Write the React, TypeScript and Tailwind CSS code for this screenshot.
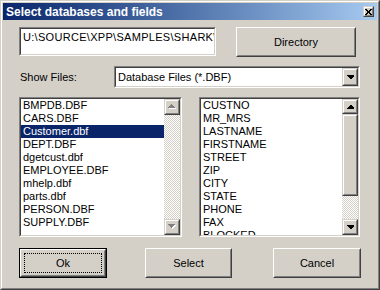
import React from "react";

const F = "font-['Liberation_Sans',Arial,sans-serif]";

function Sunken({ className = "", innerClass = "", children }: { className?: string; innerClass?: string; children?: React.ReactNode }) {
  return (
    <div className={`border border-t-[#808080] border-l-[#808080] border-r-white border-b-white ${className}`}>
      <div className={`w-full h-full border border-t-[#404040] border-l-[#404040] border-r-[#D4D0C8] border-b-[#D4D0C8] bg-white ${innerClass}`}>
        {children}
      </div>
    </div>
  );
}

function Raised({ className = "", innerClass = "", children }: { className?: string; innerClass?: string; children?: React.ReactNode }) {
  return (
    <div className={`border border-t-white border-l-white border-r-[#404040] border-b-[#404040] ${className}`}>
      <div className={`w-full h-full border border-t-[#D4D0C8] border-l-[#D4D0C8] border-r-[#808080] border-b-[#808080] bg-[#D4D0C8] ${innerClass}`}>
        {children}
      </div>
    </div>
  );
}

function SBtn({ className = "", children }: { className?: string; children?: React.ReactNode }) {
  return (
    <div className={`border border-t-[#D4D0C8] border-l-[#D4D0C8] border-r-[#404040] border-b-[#404040] ${className}`}>
      <div className="w-full h-full border border-t-white border-l-white border-r-[#808080] border-b-[#808080] bg-[#D4D0C8] flex items-center justify-center">
        {children}
      </div>
    </div>
  );
}

function Arrow({ dir, disabled }: { dir: "up" | "down"; disabled?: boolean }) {
  const pts = dir === "up" ? "3,0 4,0 7,3 7,4 0,4 0,3" : "0,0 7,0 7,1 4,4 3,4 0,1";
  const up = dir === "up" ? "M3.5 0 L7 4 L0 4 Z" : "M0 0 L7 0 L3.5 4 Z";
  if (disabled) {
    return (
      <svg width="9" height="6" viewBox="0 0 9 6" shapeRendering="crispEdges">
        <path d={up} transform="translate(1,1)" fill="#ffffff" />
        <path d={up} fill="#808080" />
      </svg>
    );
  }
  return (
    <svg width="7" height="4" viewBox="0 0 7 4" shapeRendering="crispEdges">
      <polygon points={pts} fill="#000" />
    </svg>
  );
}

const checker = "bg-[repeating-conic-gradient(#D4D0C8_0_25%,#ffffff_0_50%)] bg-[length:2px_2px]";

const files = ["BMPDB.DBF", "CARS.DBF", "Customer.dbf", "DEPT.DBF", "dgetcust.dbf", "EMPLOYEE.DBF", "mhelp.dbf", "parts.dbf", "PERSON.DBF", "SUPPLY.DBF"];
const fields = ["CUSTNO", "MR_MRS", "LASTNAME", "FIRSTNAME", "STREET", "ZIP", "CITY", "STATE", "PHONE", "FAX", "BLOCKED"];

export default function App() {
  return (
    <div className={`w-[380px] h-[290px] ${F} text-[11px] text-black`}>
      <div className="w-full h-full border border-t-[#D4D0C8] border-l-[#D4D0C8] border-r-[#404040] border-b-[#404040]">
        <div className="w-full h-full border border-t-white border-l-white border-r-[#808080] border-b-[#808080] bg-[#D4D0C8] p-px flex flex-col">
          {/* title bar */}
          <div className="h-[17px] bg-linear-to-r from-[#0A246A] to-[#A6CAF0] flex items-center justify-between pl-[3px] pr-[3px]">
            <span className="text-white font-bold text-[12px] leading-none">Select databases and fields</span>
            <SBtn className="w-[11px] h-[11px]">
              <svg width="7" height="6" viewBox="0 0 7 6" shapeRendering="crispEdges">
                <path d="M0 0 L6 6 M1 0 L7 6 M6 0 L0 6 M7 0 L1 6" stroke="#000" strokeWidth="1" fill="none" />
              </svg>
            </SBtn>
          </div>

          <div className="pl-[16px] flex flex-col">
            {/* row 1 */}
            <div className="flex items-start mt-[7px]">
              <Sunken className="w-[197px] h-[29px]" innerClass="overflow-hidden">
                <div className="pl-[2px] pt-[2px] whitespace-nowrap leading-[13px] tracking-[0.3px]">U:\SOURCE\XPP\SAMPLES\SHARK\</div>
              </Sunken>
              <Raised className="w-[120px] h-[30px] ml-[20px]" innerClass="flex items-center justify-center">
                <span>Directory</span>
              </Raised>
            </div>

            {/* row 2 */}
            <div className="flex items-center mt-[9px] h-[22px]">
              <div className="w-[95px] pl-px">Show Files:</div>
              <Sunken className="w-[246px] h-[22px]" innerClass="flex items-center">
                <div className="flex-1 pl-[2px] whitespace-nowrap">Database Files (*.DBF)</div>
                <SBtn className="w-[16px] h-full">
                  <Arrow dir="down" />
                </SBtn>
              </Sunken>
            </div>

            {/* row 3 */}
            <div className="flex mt-[9px]">
              <Sunken className="w-[163px] h-[140px]" innerClass="flex">
                <div className="flex-1 overflow-hidden">
                  {files.map((f, i) => (
                    <div
                      key={f}
                      className={`h-[13px] leading-[13px] pl-[2px] whitespace-nowrap ${i === 2 ? "bg-[#0A246A] text-white" : ""}`}
                    >
                      {f}
                    </div>
                  ))}
                </div>
                <div className={`w-[16px] h-full flex flex-col justify-between ${checker}`}>
                  <SBtn className="w-[16px] h-[16px]">
                    <Arrow dir="up" disabled />
                  </SBtn>
                  <SBtn className="w-[16px] h-[16px]">
                    <Arrow dir="down" disabled />
                  </SBtn>
                </div>
              </Sunken>
              <Sunken className="w-[161px] h-[140px] ml-[17px]" innerClass="flex">
                <div className="flex-1 overflow-hidden">
                  {fields.map((f) => (
                    <div key={f} className="h-[13px] leading-[13px] pl-[2px] whitespace-nowrap">
                      {f}
                    </div>
                  ))}
                </div>
                <div className={`w-[16px] h-full flex flex-col ${checker}`}>
                  <SBtn className="w-[16px] h-[15px]">
                    <Arrow dir="up" />
                  </SBtn>
                  <SBtn className="w-[16px] h-[82px]" />
                  <div className="flex-1" />
                  <SBtn className="w-[16px] h-[16px]">
                    <Arrow dir="down" />
                  </SBtn>
                </div>
              </Sunken>
            </div>

            {/* row 4 */}
            <div className="flex mt-[11px]">
              <div className="w-[88px] h-[30px] border border-black">
                <Raised className="w-full h-full" innerClass="p-[2px]">
                  <div className="w-full h-full border border-dotted border-black flex items-center justify-center">Ok</div>
                </Raised>
              </div>
              <Raised className="w-[87px] h-[30px] ml-[38px]" innerClass="flex items-center justify-center">
                <span>Select</span>
              </Raised>
              <Raised className="w-[88px] h-[30px] ml-[41px]" innerClass="flex items-center justify-center">
                <span>Cancel</span>
              </Raised>
            </div>
          </div>
        </div>
      </div>
    </div>
  );
}
